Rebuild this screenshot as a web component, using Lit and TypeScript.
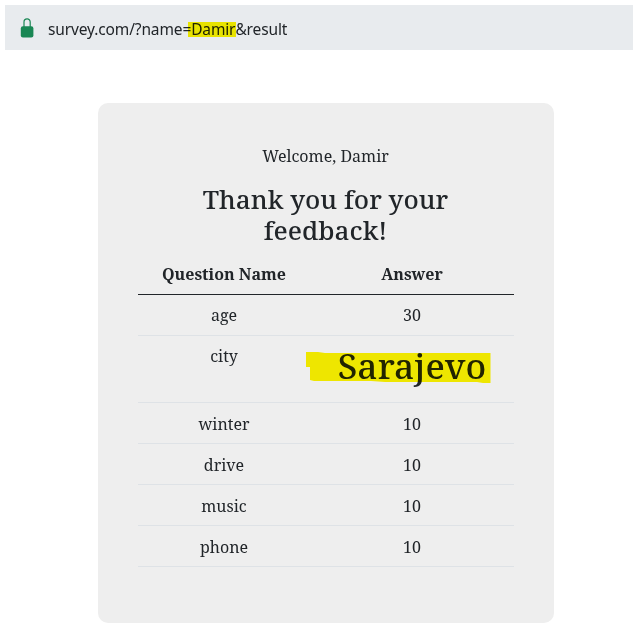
import { LitElement, html, css, svg } from "lit";
import { customElement } from "lit/decorators.js";

interface Answer { name: string; value: string; marked?: boolean }

const answers: Answer[] = [
  { name: "age", value: "30" },
  { name: "city", value: "Sarajevo", marked: true },
  { name: "winter", value: "10" },
  { name: "drive", value: "10" },
  { name: "music", value: "10" },
  { name: "phone", value: "10" },
];

@customElement("address-bar")
export class AddressBar extends LitElement {
  static styles = css`
    :host { display: flex; align-items: center; box-sizing: border-box; height: 45px; margin: 5px 0 0 5px; padding-left: 15px; background: #e8ebee; color: #212529; }
    svg { display: block; width: 14px; height: 21px; margin-right: 14px; }
    .url { font: 15.5px/20px "Noto Sans", sans-serif; letter-spacing: -0.13px; white-space: nowrap; padding-top: 3px; }
    .name { position: relative; }
    .marker { position: absolute; left: -3px; right: -1px; top: 4px; height: 15px; background: #fff700; mix-blend-mode: multiply; }
  `;
  render() {
    return html`
      <svg viewBox="0 0 14 21">
        <path d="M4 10V4.9a3.1 3.1 0 0 1 6.2 0V10" fill="none" stroke="#198754" stroke-width="1.2" />
        <rect x="0.8" y="9.3" width="12.6" height="11.2" rx="2.1" fill="#198754" />
      </svg>
      <div class="url">survey.com/?name=<span class="name">Damir<i class="marker"></i></span>&amp;result</div>
    `;
  }
}

@customElement("app-root")
export class AppRoot extends LitElement {
  static styles = css`
    :host { display: block; height: 636px; overflow: hidden; background: #fff; color: #212529; font: 16px/24px "Noto Serif", serif; text-align: center; }
    .card { box-sizing: border-box; width: 456px; height: 520px; margin: 53px 0 0 98px; padding: 40.6px 40px 0; border-radius: 10px; background: #eee; }
    p { margin: 0 0 16px -1px; }
    h2 { margin: 0 0 8px -1px; font-size: 26.1px; line-height: 31.2px; font-weight: 500; }
    table { width: 376px; table-layout: fixed; border-collapse: separate; border-spacing: 0; }
    .question { width: 172px; }
    th, td { box-sizing: border-box; padding: 8px; vertical-align: top; border-bottom: 1px solid #dee2e6; }
    tr:nth-child(n + 3) td { padding: 8.5px 8px 7.5px; }
    th { font-weight: 700; border-bottom-color: #212529; }
    .big { position: relative; margin: 0 0 7.6px; font-size: 35.4px; line-height: 42.5px; font-weight: 500; }
    .stroke { position: absolute; left: -13px; top: 7px; width: 188px; height: 34px; mix-blend-mode: multiply; }
  `;
  render() {
    return html`
      <address-bar></address-bar>
      <main class="card">
        <p>Welcome, Damir</p>
        <h2>Thank you for your<br>feedback!</h2>
        <table>
          <thead><tr><th class="question">Question Name</th><th>Answer</th></tr></thead>
          <tbody>
            ${answers.map((a) => html`<tr>
              <td>${a.name}</td>
              <td>${a.marked
                ? html`<div class="big">${a.value}${this.stroke()}</div>`
                : a.value}</td>
            </tr>`)}
          </tbody>
        </table>
      </main>
    `;
  }
  stroke() {
    return html`<svg class="stroke" viewBox="0 0 188 34">${svg`<path d="M1 1H13L20 2H185.5V32H178L172 31H80L66 30H9L5 29V16H1Z" fill="#fff700" />`}</svg>`;
  }
}
